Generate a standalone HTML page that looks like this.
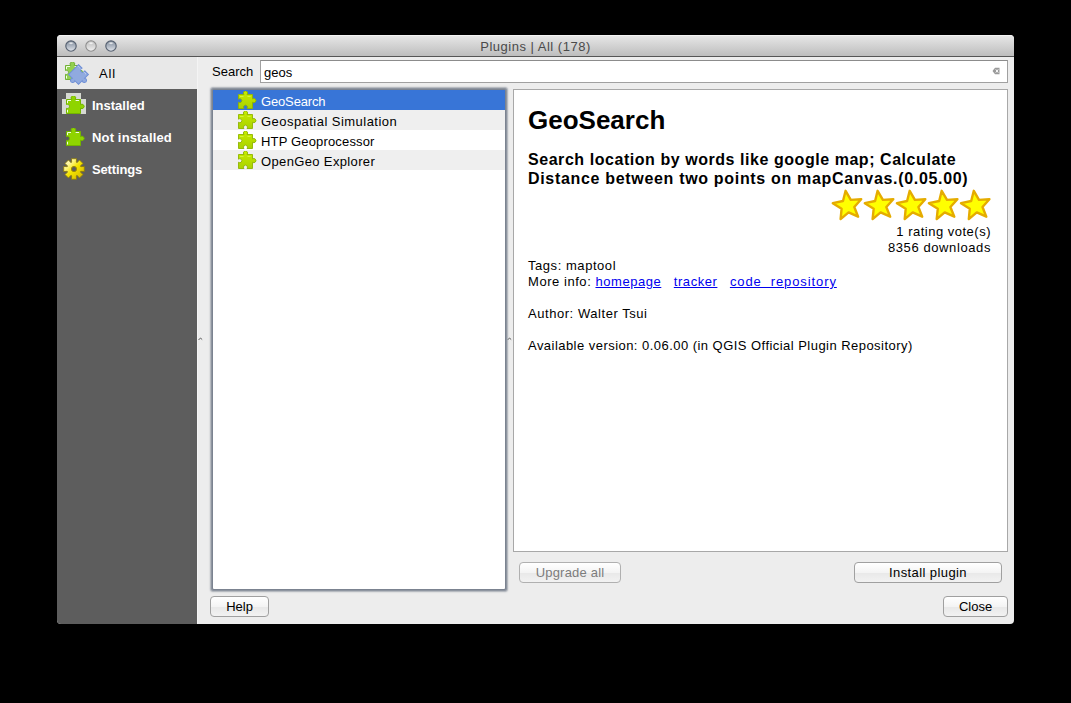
<!DOCTYPE html>
<html><head><meta charset="utf-8">
<style>
html,body{margin:0;padding:0;}
body{width:1071px;height:703px;background:#000;position:relative;overflow:hidden;font-family:"Liberation Sans",sans-serif;font-size:13px;color:#000;}
div,svg{position:absolute;}
#win{left:57px;top:35px;width:957px;height:589px;background:#ededed;border-radius:4px;overflow:hidden;}
#title{left:57px;top:35px;width:957px;height:22px;background:linear-gradient(#f4f4f4 0,#f4f4f4 1px,#e6e6e6 1px,#bdbdbd 21px,#555 21px);border-radius:4px 4px 0 0;}
.tt{left:57px;width:957px;top:39px;text-align:center;color:#4a4a4a;font-size:13px;white-space:nowrap;letter-spacing:0.5px;}
.light{top:40px;width:12px;height:12px;border-radius:50%;box-shadow:inset 0 0 0 1.4px #4f5866, 0 0.5px 0.5px rgba(255,255,255,.6);background:radial-gradient(ellipse 3px 1.6px at 50% 22%,rgba(255,255,255,.95),rgba(255,255,255,0)),linear-gradient(#8c96a4,#b4bcc8 45%,#dfe4ea);}
.light.m{box-shadow:inset 0 0 0 1.2px #8c8c8c;background:radial-gradient(ellipse 3px 1.6px at 50% 22%,rgba(255,255,255,.95),rgba(255,255,255,0)),linear-gradient(#c4c4c4,#dadada 50%,#f2f2f2);}
#side{left:57px;top:89px;width:140px;height:535px;background:#5d5d5d;border-radius:0 0 0 4px;}
#allrow{left:57px;top:57px;width:140px;height:32px;background:#e8e8e8;}
.sl{left:92px;color:#fff;font-weight:bold;font-size:13px;white-space:nowrap;}
.btn{height:19px;border:1px solid #a0a0a0;border-radius:4px;background:linear-gradient(#ffffff,#f4f4f4 50%,#e8e8e8 51%,#f2f2f2);text-align:center;line-height:19px;font-size:13px;color:#000;white-space:nowrap;}
.row{left:213px;width:292px;height:20px;}
.row .n{left:48px;top:4px;font-size:13px;white-space:nowrap;}
.dt{left:528px;font-size:13px;white-space:nowrap;}
.u{color:#0000ee;text-decoration:underline;}
</style></head><body>
<svg width="0" height="0" style="left:0;top:0"><defs>
<linearGradient id="lg" x1="0" y1="0" x2="0" y2="1"><stop offset="0" stop-color="#c8ec00"/><stop offset="1" stop-color="#aad200"/></linearGradient>
<linearGradient id="gg" x1="0" y1="0" x2="1" y2="1"><stop offset="0" stop-color="#ffffe0"/><stop offset="0.25" stop-color="#fff79a"/><stop offset="0.5" stop-color="#f4e400"/><stop offset="1" stop-color="#d0b000"/></linearGradient>
</defs></svg>
<div id="win"></div>
<div id="title"></div>
<svg style="left:64px;top:39px" width="14" height="14" viewBox="0 0 14 14"><defs><linearGradient id="tl1" x1="0" y1="0" x2="0" y2="1"><stop offset="0" stop-color="#7f8a99"/><stop offset=".5" stop-color="#aeb6c2"/><stop offset="1" stop-color="#e2e6ec"/></linearGradient><linearGradient id="tl2" x1="0" y1="0" x2="0" y2="1"><stop offset="0" stop-color="#bcbcbc"/><stop offset=".5" stop-color="#d6d6d6"/><stop offset="1" stop-color="#f2f2f2"/></linearGradient><radialGradient id="hl" cx=".5" cy=".5" r=".5"><stop offset="0" stop-color="#fff" stop-opacity=".95"/><stop offset="1" stop-color="#fff" stop-opacity="0"/></radialGradient></defs><circle cx="7" cy="7" r="5.2" fill="url(#tl1)" stroke="#566070" stroke-width="1.15"/><ellipse cx="7" cy="4.2" rx="3" ry="1.5" fill="url(#hl)"/></svg>
<svg style="left:84px;top:39px" width="14" height="14" viewBox="0 0 14 14"><circle cx="7" cy="7" r="5.2" fill="url(#tl2)" stroke="#8c8c8c" stroke-width="1.05"/><ellipse cx="7" cy="4.2" rx="3" ry="1.5" fill="url(#hl)"/></svg>
<svg style="left:104px;top:39px" width="14" height="14" viewBox="0 0 14 14"><circle cx="7" cy="7" r="5.2" fill="url(#tl1)" stroke="#566070" stroke-width="1.15"/><ellipse cx="7" cy="4.2" rx="3" ry="1.5" fill="url(#hl)"/></svg>
<div class="tt">Plugins | All (178)</div>

<div id="allrow"></div>
<div id="side"></div>
<div style="left:197px;top:57px;width:1px;height:567px;background:#f4f4f4"></div>
<!-- All icon -->
<svg style="left:65px;top:62px" width="20" height="20" viewBox="0 0 20 20"><path d="M0.5,3.5 L5.66,3.5 A2.3,2.3 0 1 1 9.14,3.5 L14.5,3.5 L14.5,8.7 A2.2,2.2 0 1 1 14.5,12.1 L14.5,17.5 L0.5,17.5 L0.5,12.3 A2.1,2.1 0 1 0 0.5,8.5 Z" fill="#92d050" stroke="#72b038" stroke-width="1"/><path d="M1.5,7.2 V4.5 H5 M9.6,4.5 H13 M1.5,13.8 V16.5" stroke="#f2ffe6" stroke-width="1" fill="none"/></svg>
<svg style="left:60px;top:56px" width="40" height="40" viewBox="0 0 40 40"><g transform="translate(18.5,18.5) rotate(45)"><path d="M-7,-7 L-2,-7 A2.2,2.2 0 1 0 2,-7 L7,-7 L7,-1.77 A2.2,2.2 0 1 1 7,1.77 L7,7 L1.77,7 A2.2,2.2 0 1 1 -1.77,7 L-7,7 Z" fill="#90aadf" stroke="#6f8fd6" stroke-width="1"/><path d="M-6,-5.5 H5" stroke="#e8f0ff" stroke-width="0.8" stroke-dasharray="1,1"/></g></svg>
<div style="left:99px;top:66px;font-size:13px;letter-spacing:0.8px">All</div>
<!-- Installed icon -->
<div style="left:66px;top:93px;width:15px;height:21px;background:#d6d9d2;"></div>
<div style="left:62px;top:99px;width:24px;height:15px;background:#d6d9d2;"></div>
<svg style="left:66px;top:96px" width="20" height="20" viewBox="0 0 20 20"><path d="M0.5,3.5 L5.66,3.5 A2.3,2.3 0 1 1 9.14,3.5 L14.5,3.5 L14.5,8.7 A2.2,2.2 0 1 1 14.5,12.1 L14.5,17.5 L0.5,17.5 L0.5,12.3 A2.1,2.1 0 1 0 0.5,8.5 Z" fill="#8fd400" stroke="#74b400" stroke-width="1"/><path d="M1.5,7.2 V4.5 H5 M9.6,4.5 H13 M1.5,13.8 V16.5" stroke="#f2ffe6" stroke-width="1" fill="none"/></svg>
<svg style="left:66px;top:128px" width="20" height="20" viewBox="0 0 20 20"><path d="M0.5,3.5 L5.66,3.5 A2.3,2.3 0 1 1 9.14,3.5 L14.5,3.5 L14.5,8.7 A2.2,2.2 0 1 1 14.5,12.1 L14.5,17.5 L0.5,17.5 L0.5,12.3 A2.1,2.1 0 1 0 0.5,8.5 Z" fill="#8fd400" stroke="#74b400" stroke-width="1"/><path d="M1.5,7.2 V4.5 H5 M9.6,4.5 H13 M1.5,13.8 V16.5" stroke="#f2ffe6" stroke-width="1" fill="none"/></svg>
<svg style="left:63px;top:158px" width="22" height="22" viewBox="0 0 22 22"><polygon points="8.32,4.53 8.65,3.98 8.44,0.71 13.56,0.71 13.35,3.98 13.68,4.53 14.30,4.38 16.46,1.91 20.09,5.54 17.62,7.70 17.47,8.32 18.02,8.65 21.29,8.44 21.29,13.56 18.02,13.35 17.47,13.68 17.62,14.30 20.09,16.46 16.46,20.09 14.30,17.62 13.68,17.47 13.35,18.02 13.56,21.29 8.44,21.29 8.65,18.02 8.32,17.47 7.70,17.62 5.54,20.09 1.91,16.46 4.38,14.30 4.53,13.68 3.98,13.35 0.71,13.56 0.71,8.44 3.98,8.65 4.53,8.32 4.38,7.70 1.91,5.54 5.54,1.91 7.70,4.38" fill="url(#gg)" stroke="#8c7c10" stroke-width="0.9"/><circle cx="11" cy="11" r="2.6" fill="#5d5d5d" stroke="#a08c00" stroke-width="1"/></svg>
<div class="sl" style="top:98px">Installed</div>
<div class="sl" style="top:130px;letter-spacing:0.15px">Not installed</div>
<div class="sl" style="top:162px;letter-spacing:-0.15px">Settings</div>
<!-- splitter carets -->
<svg style="left:197px;top:334px" width="8" height="8" viewBox="0 0 8 8"><path d="M1.5,6 L3.5,4 L5.2,5.6" stroke="#5a5a5a" stroke-width="1" fill="none"/></svg>
<svg style="left:506px;top:334px" width="8" height="8" viewBox="0 0 8 8"><path d="M1.5,6 L3.5,4 L5.2,5.6" stroke="#5a5a5a" stroke-width="1" fill="none"/></svg>

<!-- search -->
<div style="left:212px;top:64px;">Search</div>
<div style="left:260px;top:60px;width:746px;height:21px;background:#fff;border:1px solid #a0a0a0;border-top-color:#8c8c8c;"></div>
<div style="left:264px;top:65px;">geos</div>
<svg style="left:992px;top:67px" width="9" height="9" viewBox="0 0 9 9"><path d="M0.5,4 L3,0.8 H7.5 V7.2 H3 Z" fill="#9a9a9a"/><path d="M3.8,2.4 L6.2,5.6 M6.2,2.4 L3.8,5.6" stroke="#fff" stroke-width="1"/></svg>

<!-- list frame -->

<div style="left:213px;top:90px;width:292px;height:499px;background:#fff;border-radius:1px;box-shadow:0 0 0 1px #7b8390, 0 0 0 2px #8e95a0, 0 0 1.5px 2.5px rgba(150,156,166,.8);"></div>
<div class="row" style="top:90px;background:#3875d7;color:#fff;"><div class="n" style="letter-spacing:-0.15px">GeoSearch</div></div>
<div class="row" style="top:110px;background:#efefef;"><div class="n" style="letter-spacing:0.46px">Geospatial Simulation</div></div>
<div class="row" style="top:130px;background:#fff;"><div class="n" style="letter-spacing:0.16px">HTP Geoprocessor</div></div>
<div class="row" style="top:150px;background:#efefef;"><div class="n" style="letter-spacing:0.36px">OpenGeo Explorer</div></div>
<svg style="left:238px;top:91px" width="20" height="20" viewBox="0 0 20 20"><path d="M0.5,3.5 L6.03,3.5 A2.1,2.1 0 1 1 8.97,3.5 L14.5,3.5 L14.5,7.95 A2.1,2.1 0 1 1 14.5,11.25 L14.5,17.5 L9.02,17.5 A2,2 0 1 0 5.98,17.5 L0.5,17.5 L0.5,11.22 A2,2 0 1 0 0.5,8.18 Z" fill="url(#lg)" stroke="#90b400" stroke-width="0.9"/><path d="M2,5.5 H5.5 M9.5,5.5 H12.5" stroke="#e4ff60" stroke-width="1" opacity=".6"/></svg>
<svg style="left:238px;top:111px" width="20" height="20" viewBox="0 0 20 20"><path d="M0.5,3.5 L6.03,3.5 A2.1,2.1 0 1 1 8.97,3.5 L14.5,3.5 L14.5,7.95 A2.1,2.1 0 1 1 14.5,11.25 L14.5,17.5 L9.02,17.5 A2,2 0 1 0 5.98,17.5 L0.5,17.5 L0.5,11.22 A2,2 0 1 0 0.5,8.18 Z" fill="url(#lg)" stroke="#90b400" stroke-width="0.9"/><path d="M2,5.5 H5.5 M9.5,5.5 H12.5" stroke="#e4ff60" stroke-width="1" opacity=".6"/></svg>
<svg style="left:238px;top:131px" width="20" height="20" viewBox="0 0 20 20"><path d="M0.5,3.5 L6.03,3.5 A2.1,2.1 0 1 1 8.97,3.5 L14.5,3.5 L14.5,7.95 A2.1,2.1 0 1 1 14.5,11.25 L14.5,17.5 L9.02,17.5 A2,2 0 1 0 5.98,17.5 L0.5,17.5 L0.5,11.22 A2,2 0 1 0 0.5,8.18 Z" fill="url(#lg)" stroke="#90b400" stroke-width="0.9"/><path d="M2,5.5 H5.5 M9.5,5.5 H12.5" stroke="#e4ff60" stroke-width="1" opacity=".6"/></svg>
<svg style="left:238px;top:151px" width="20" height="20" viewBox="0 0 20 20"><path d="M0.5,3.5 L6.03,3.5 A2.1,2.1 0 1 1 8.97,3.5 L14.5,3.5 L14.5,7.95 A2.1,2.1 0 1 1 14.5,11.25 L14.5,17.5 L9.02,17.5 A2,2 0 1 0 5.98,17.5 L0.5,17.5 L0.5,11.22 A2,2 0 1 0 0.5,8.18 Z" fill="url(#lg)" stroke="#90b400" stroke-width="0.9"/><path d="M2,5.5 H5.5 M9.5,5.5 H12.5" stroke="#e4ff60" stroke-width="1" opacity=".6"/></svg>

<!-- details -->
<div style="left:513px;top:89px;width:493px;height:461px;background:#fff;border:1px solid #a8a8a8;"></div>
<div class="dt" style="top:105px;font-size:26px;font-weight:bold;">GeoSearch</div>
<div class="dt" style="top:150px;font-size:16px;font-weight:bold;line-height:19px;"><span style="letter-spacing:0.55px">Search location by words like google map; Calculate</span><br><span style="letter-spacing:0.68px">Distance between two points on mapCanvas.(0.05.00)</span></div>
<svg style="left:820px;top:186px" width="180" height="40" viewBox="0 0 180 40"><g fill="#ffff00" stroke="#e5ac00" stroke-width="2.4" stroke-linejoin="round"><polygon points="25.6,4.8 30.8,13.9 41.2,13.2 34.3,21.0 38.1,30.7 28.6,26.4 20.6,33.1 21.6,22.7 12.8,17.2 23.0,15.0"/><polygon points="57.6,4.8 62.9,13.9 73.3,13.2 66.3,21.0 70.2,30.7 60.6,26.4 52.6,33.1 53.7,22.7 44.8,17.2 55.1,15.0"/><polygon points="89.7,4.8 94.9,13.9 105.3,13.2 98.4,21.0 102.2,30.7 92.7,26.4 84.7,33.1 85.7,22.7 76.9,17.2 87.1,15.0"/><polygon points="121.7,4.8 127.0,13.9 137.4,13.2 130.4,21.0 134.3,30.7 124.7,26.4 116.7,33.1 117.8,22.7 108.9,17.2 119.2,15.0"/><polygon points="153.8,4.8 159.0,13.9 169.4,13.2 162.5,21.0 166.3,30.7 156.8,26.4 148.8,33.1 149.8,22.7 141.0,17.2 151.2,15.0"/></g></svg>
<div class="dt" style="left:auto;right:80px;top:224px;text-align:right;line-height:16px;"><span style="letter-spacing:0.5px">1 rating vote(s)</span><br><span style="letter-spacing:0.6px">8356 downloads</span></div>
<div class="dt" style="top:258px;line-height:16px;letter-spacing:0.55px">Tags: maptool<br>More info: <span class="u">homepage</span> &nbsp; <span class="u">tracker</span> &nbsp; <span class="u" style="letter-spacing:0.9px">code&nbsp;&nbsp;repository</span><br><br>Author: Walter Tsui<br><br><span style="letter-spacing:0.46px">Available version: 0.06.00 (in QGIS Official Plugin Repository)</span></div>

<!-- buttons -->
<div class="btn" style="left:519px;top:562px;width:100px;color:#7c7c7c;border-color:#b0b0b0;letter-spacing:0.2px">Upgrade all</div>
<div class="btn" style="left:854px;top:562px;width:146px;letter-spacing:0.4px">Install plugin</div>
<div class="btn" style="left:210px;top:596px;width:57px;">Help</div>
<div class="btn" style="left:943px;top:596px;width:63px;">Close</div>
</body></html>
